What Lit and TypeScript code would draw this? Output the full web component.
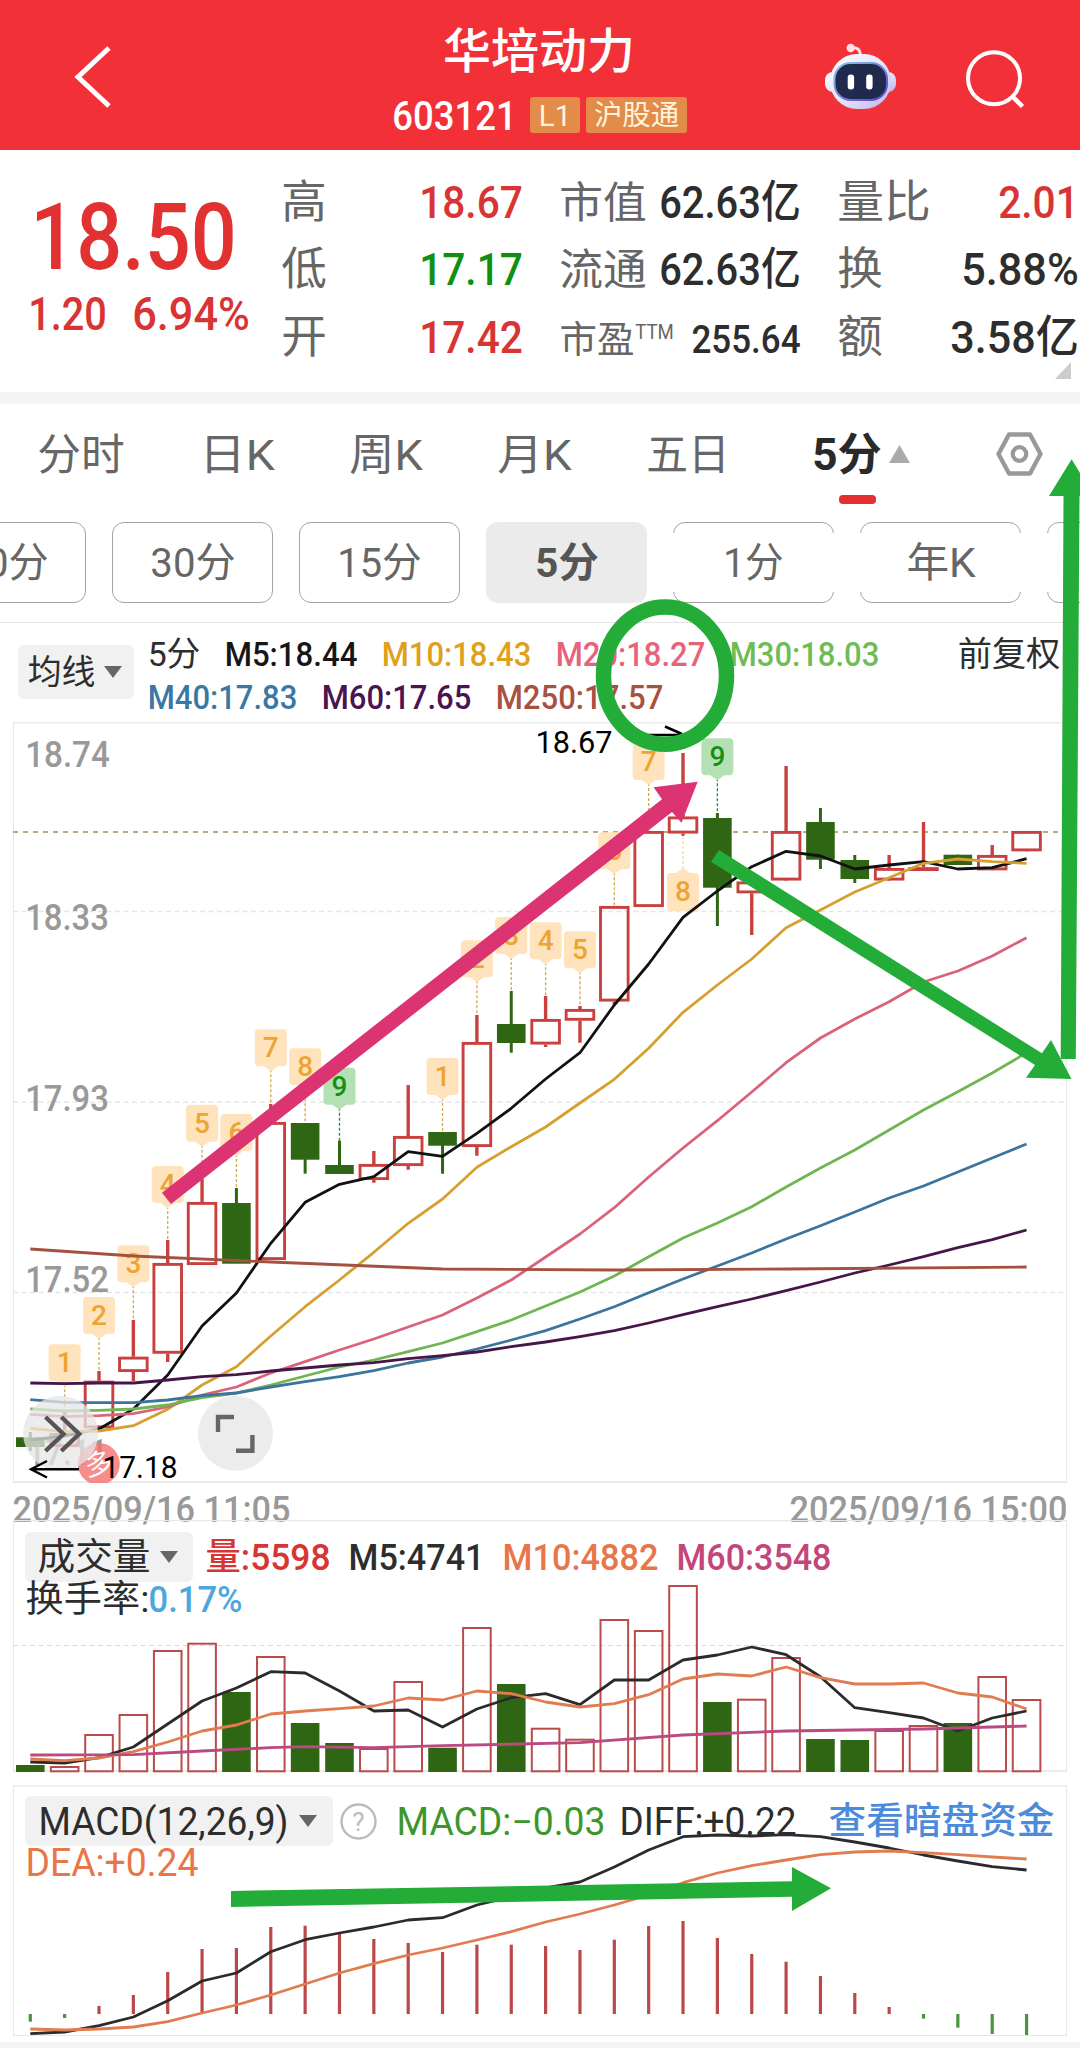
import { LitElement, html, svg, css } from "lit";
import { customElement } from "lit/decorators.js";

type Candle = [up: 0 | 1, top: number, bottom: number, high: number, low: number];

const FIRST_X = 30.3;
const STEP = 34.354;
const cx = (i: number) => FIRST_X + STEP * i;

const CANDLES: Candle[] = [
  [0, 1437.3, 1447, 1432, 1451], [1, 1433, 1447, 1410, 1447], [1, 1380.7, 1428.3, 1371, 1428],
  [1, 1356.7, 1372, 1320, 1381], [1, 1263, 1353.7, 1240, 1362], [1, 1202, 1265, 1179, 1265],
  [0, 1203, 1263.7, 1188, 1263], [1, 1122, 1260, 1104, 1260], [0, 1123, 1159.7, 1123, 1173.7],
  [0, 1165, 1174, 1140.7, 1174], [1, 1164, 1180, 1151, 1182.7], [1, 1136, 1166, 1085, 1169.7],
  [0, 1132, 1145.7, 1132, 1173.7], [1, 1042, 1147, 1015, 1155.7], [0, 1024, 1043, 991, 1052.7],
  [1, 1019, 1044.5, 996, 1047], [1, 1009, 1020.7, 1006, 1042.7], [1, 906, 1001.5, 906, 1005],
  [1, 831, 907, 831, 907], [1, 816.5, 833.5, 753, 835.7], [0, 818, 887.7, 813, 926],
  [1, 881.5, 893.3, 881, 935], [1, 831, 880.5, 766, 880], [0, 822, 859.7, 808, 869],
  [0, 860, 879, 855, 883], [1, 868, 880.5, 855, 880], [1, 867.2, 871, 822, 870],
  [0, 854.7, 865, 854.7, 865], [1, 855, 870.3, 845, 870], [1, 831, 851.3, 831, 851],
];

const AVERAGES: { color: string; at?: number[]; y: number[] }[] = [
  { color: "#111", y: [1440, 1436, 1429, 1409, 1375, 1326, 1293, 1243.3, 1202.3, 1184.3, 1176.7, 1151.7, 1156.3, 1133.3, 1108.3, 1079, 1052.7, 1005, 964, 917.3, 891, 866.7, 851.3, 856, 869, 865, 861.7, 869, 867.7, 858.7] },
  { color: "#d6a030", y: [1428.3, 1431.7, 1431, 1425.7, 1409.3, 1385, 1366.7, 1336, 1306.7, 1280, 1252.3, 1223.3, 1199, 1167.3, 1146.7, 1127, 1103, 1079.3, 1048.3, 1012.3, 985, 959, 927.7, 910, 892, 877.7, 863.3, 859, 861.7, 863.3] },
  { color: "#d9637a", y: [1414.3, 1416.7, 1415.7, 1413.7, 1407, 1395, 1387, 1373, 1361.7, 1350, 1339, 1327, 1315, 1298, 1280, 1257, 1234, 1207.7, 1177, 1148, 1120.7, 1092, 1062.7, 1038, 1019, 1001.7, 982, 971, 956, 937.7] },
  { color: "#6fb653", y: [1409, 1411, 1410.3, 1409, 1405, 1397.7, 1393, 1385, 1376, 1367, 1360, 1351.7, 1343, 1331.7, 1320, 1306, 1292, 1276, 1256.7, 1238, 1223, 1206.7, 1187, 1168, 1150, 1130, 1110, 1091.7, 1073, 1052.7] },
  { color: "#3c749c", y: [1399.7, 1402.3, 1402.7, 1402.7, 1400, 1395.7, 1393, 1387, 1381.7, 1376.7, 1370.7, 1363, 1357, 1349, 1340, 1330.7, 1319, 1306.7, 1292.7, 1279, 1266, 1253, 1239, 1225.7, 1212, 1198, 1186, 1172, 1158, 1144] },
  { color: "#451648", y: [1383, 1383.7, 1383, 1383, 1380, 1376.7, 1374.7, 1371, 1368, 1365, 1362.7, 1358.7, 1355.7, 1352, 1346.7, 1342, 1336.7, 1330.7, 1323, 1314.7, 1306.7, 1299, 1290.7, 1282, 1273, 1265, 1256.7, 1247.7, 1239.7, 1230] },
  { color: "#a4513f", at: [0, 3, 7, 12, 17, 22, 29], y: [1249, 1256, 1262, 1269, 1270, 1269, 1267] },
];

// [candle index, label, top of the tag, end of its dotted leader]
const TAGS: [number, string, number, number][] = [
  [1, "1", 1344.3, 1410], [2, "2", 1297, 1371], [3, "3", 1245.3, 1320], [4, "4", 1166, 1240],
  [5, "5", 1104.7, 1180], [6, "6", 1114, 1188], [7, "7", 1029.3, 1104], [8, "8", 1048.3, 1123],
  [9, "9", 1067.7, 1141], [12, "1", 1058, 1132], [13, "2", 940.3, 1015], [14, "3", 917, 991],
  [15, "4", 922.3, 996], [16, "5", 931.3, 1005], [17, "6", 832.3, 906], [18, "7", 743, 831],
  [20, "9", 738.3, 813],
];

const VOLUMES: [0 | 1, number][] = [
  [0, 1765], [1, 1766], [1, 1734], [1, 1714], [1, 1650], [1, 1642.7], [0, 1692], [1, 1656], [0, 1723], [0, 1743],
  [1, 1748], [1, 1681], [0, 1747.7], [1, 1627], [0, 1684], [1, 1727.7], [1, 1738.7], [1, 1619], [1, 1630], [1, 1585],
  [0, 1702], [1, 1698.7], [1, 1657], [0, 1739], [0, 1740], [1, 1730], [1, 1725], [0, 1723], [1, 1676], [1, 1699],
];
const VOL5 = [1762, 1763, 1757.7, 1747, 1724, 1701, 1688, 1671.7, 1673, 1691, 1711, 1710, 1727, 1709, 1697.7, 1693.7, 1704.7, 1680, 1680, 1660, 1655, 1647, 1654.7, 1676.7, 1707.7, 1712.7, 1718, 1731, 1718, 1711];
const VOL10 = [1759, 1760.7, 1758, 1751.7, 1742, 1731, 1725, 1714, 1711, 1708.7, 1706, 1698, 1700, 1691, 1693.7, 1702, 1707, 1703.7, 1694.7, 1679, 1674, 1676, 1667, 1677.7, 1684, 1684, 1683, 1693, 1697, 1709];
const VOL60_AT = [0, 3, 5, 7, 8, 10, 12, 16, 19, 22, 26, 29];
const VOL60 = [1755, 1754.7, 1751, 1747.7, 1746.7, 1747.7, 1745.7, 1742.7, 1735, 1731, 1729, 1726];

const MACD_ZERO = 2014;
const MACD = [2021.7, 2018, 2006, 1995, 1972, 1949, 1948, 1927, 1925.7, 1933, 1939, 1943, 1952, 1944.7, 1944.7, 1946, 1950, 1939.7, 1926, 1921, 1938, 1954, 1961.7, 1976, 1993, 2007, 2018.7, 2027.7, 2034, 2035];
const DIFF = [2033.7, 2032, 2025.7, 2017, 2000.7, 1981, 1973, 1951.7, 1939.7, 1933, 1927, 1920, 1917.7, 1905, 1896.7, 1888, 1882, 1867, 1850, 1836.7, 1835, 1836, 1834.7, 1836.7, 1842, 1848, 1855, 1861, 1866.7, 1870];
const DEA = [2029, 2030, 2029, 2027, 2021.7, 2013, 2005, 1995, 1984, 1973, 1963.7, 1955, 1948, 1940, 1931.7, 1922, 1914, 1905, 1895, 1882.7, 1873, 1865.7, 1860, 1854.7, 1852, 1851, 1852.7, 1854.7, 1857, 1859];

const line = (ys: number[], color: string, width = 2.8, at?: number[]) => svg`
  <polyline fill="none" stroke=${color} stroke-width=${width} stroke-linejoin="round"
    points=${ys.map((y, i) => `${cx(at ? at[i] : i)},${y}`).join(" ")}></polyline>`;

// Text condensed to a given width; the box is as tall as a digit and sits on the baseline.
const fit = (s: string, w: number, size: number, cls = "") => html`
  <svg class="fit ${cls}" width=${w} height=${Math.round(size * 0.71)}>
    <text x=${-size * 0.04} y=${Math.round(size * 0.71)} font-size=${size}
      textLength=${w + size * 0.08} lengthAdjust="spacingAndGlyphs">${s}</text>
  </svg>`;

const label = (s: string, x: number, y: number, w: number, size: number, cls: string) => svg`
  <text class=${cls} x=${x - size * 0.05} y=${y} font-size=${size} textLength=${w + size * 0.1}
    lengthAdjust="spacingAndGlyphs">${s}</text>`;

const caret = () => html`<svg class="caret" width="18" height="12"><path d="M0 0H18L9 12Z" fill="#666"></path></svg>`;

@customElement("app-root")
export class AppRoot extends LitElement {
  static styles = css`
    :host { display: block; position: relative; width: 1080px; height: 2048px; overflow: hidden;
      background: #fff; color: #2d2d2d; font-family: Roboto, "Noto Sans CJK SC", sans-serif; }
    svg { display: block; flex: none; }
    text { fill: currentColor; }
    .fit { overflow: visible; }
    .m { font-weight: 500; }
    .b { font-weight: 700; }
    .red { color: #d93434; }
    .green { color: #109010; }
    .gray { color: #666; }
    .row { display: flex; align-items: flex-end; }

    header { display: flex; height: 150px; background: #f23038; color: #fff; }
    .back { margin: 44px 0 0 73px; }
    .title { display: flex; flex-direction: column; width: 294px; margin-left: 281px; }
    .name { margin: 34px 0 0 51px; }
    .codes { display: flex; align-items: center; gap: 6px; height: 36px; margin-top: 29px; }
    .codes .code { margin-right: 9px; }
    .tag { display: flex; align-items: center; justify-content: center; height: 36px; border-radius: 3px;
      background: #e38b49; color: #fff3dc; }
    .l1 { width: 50px; }
    .hk { width: 101px; }
    .bot { margin: 42px 0 0 136px; }
    .search { margin: 49px 0 0 68px; }

    .quote { display: flex; height: 242px; }
    .price { width: 281px; padding-top: 53px; box-sizing: border-box; }
    .last { margin-left: 34px; color: #e23131; }
    .change { gap: 29px; margin: 28px 0 0 30px; }
    .stats { display: flex; flex-direction: column; width: 240px; margin-right: 38px; }
    .stats .row { height: 67.7px; justify-content: space-between; }
    .stats .row > .gray { margin-left: 2px; }
    .stats.end { margin-right: 0; }
    .ttm { align-self: flex-end; margin: 0 auto 14px 3px; }
    .fold { align-self: flex-end; margin: 9px 6px 0 0; }
    .strip { height: 12px; background: #f4f4f4; }

    .tabs { height: 66px; }
    .tabs > .fit { margin-left: 78px; }
    .tabs > .fit:first-child { margin-left: 39px; }
    .now { margin-left: 86px; color: #2a2a2a; }
    .up { margin: 0 0 7px 9px; }
    .hex { margin: 0 0 -7px 86px; }
    .mark { width: 37px; height: 9px; margin: 25px 0 18px 839px; border-radius: 4px; background: #e22f2f; }
    .chips { display: flex; gap: 26px; margin-left: -75px; height: 81px; color: #666; }
    .chip { position: relative; flex: none; display: flex; align-items: center; justify-content: center;
      width: 161px; box-sizing: border-box; border: 1.5px solid #a3a3a3; border-radius: 12px; }
    .chip .fit { position: relative; }
    .open::before { content: ""; position: absolute; inset: 10px -3px; background: #fff; }
    .on { border: none; background: #ebebeb; color: #555; }

    .legend { display: flex; height: 99px; margin-top: 19px; border-top: 1px solid #e4e4e4; }
    .drop { display: flex; align-items: center; background: #f1f1f1; border-radius: 6px; }
    .ma { width: 116px; height: 54px; margin: 22px 15px 0 18px; box-sizing: border-box; padding-left: 11px; gap: 10px; }
    .line { height: 43px; gap: 27px; }
    .adj { margin: 19px 0 0 81px; }
    .c5 { color: #161616; } .c10 { color: #dfa01c; } .c20 { color: #e5647a; } .c30 { color: #6fbc54; }
    .c40 { color: #3a78a4; } .c60 { color: #4b1450; } .c250 { color: #a9513f; }

    .dates { justify-content: space-between; height: 37px; padding: 0 14px; color: #999; }
    .dates .fit { margin-bottom: -2px; }
    .panel { display: grid; grid-template-columns: 1080px; }
    .panel > * { grid-area: 1 / 1; }
    .vol { height: 265px; }
    .mac { height: 257px; }
    .info { display: flex; flex-direction: column; }
    .vhead { display: flex; align-items: center; height: 50px; margin: 12px 0 0 25px; }
    .vdrop { width: 168px; height: 50px; margin-right: 14px; box-sizing: border-box; padding-left: 14px; gap: 11px; }
    .vhead > .fit { margin-right: 21px; }
    .turn { gap: 2px; margin: 4px 0 0 27px; }
    .mhead { display: flex; align-items: center; height: 50px; margin: 11px 0 0 25px; }
    .mdrop { width: 308px; height: 50px; margin-right: 7px; box-sizing: border-box; padding-left: 15px; gap: 12px; }
    .mhead .diff { margin: 0 35px 0 17px; }
    .help { margin-right: 21px; }
    .help text { fill: #bbb; }
    .mgreen { color: #3d962c; }
    .orange { color: #e8764a; }
    .plum { color: #c4457c; }
    .sky { color: #4da6dc; }
    .link { color: #4a8bdc; }
    .dea { margin: 3px 0 0 27px; }
    .foot { height: 6px; background: #f4f4f4; }
    .axis { color: #999; }
    .ink { color: #000; }
    .otag { color: #eda432; font-weight: 500; }
    .gtag { color: #149014; font-weight: 500; }
    .seal { color: #fff; }
    .notes { position: absolute; left: 0; top: 0; }
  `;

  private tag([i, n, top, end]: [number, string, number, number]) {
    const x = cx(i);
    const g = n === "9";
    return svg`
      <path d="M${x} ${top + 40}V${end}" stroke=${g ? "#2d8a2d" : "#d2a94e"} stroke-width="1.3" stroke-dasharray="3 2"></path>
      <path d=${`M${x - 12} ${top}h24q4 0 4 4v29q0 4-4 4h-5l-7 5-7-5h-5q-4 0-4-4v-29q0-4 4-4Z`}
        fill=${g ? "#b4e1b3" : "#ffe3bc"}></path>
      <text class=${g ? "gtag" : "otag"} x=${x} y=${top + 28} font-size="28" text-anchor="middle">${n}</text>`;
  }

  private candle([up, top, bottom, high, low]: Candle, i: number) {
    const x = cx(i);
    return up
      ? svg`<path d="M${x} ${high}V${top}M${x} ${bottom}V${low}" stroke="#c8413f" stroke-width="3.4"></path>
          <rect x=${x - 13.8} y=${top + 1.4} width="27.6" height=${Math.max(bottom - top - 2.8, 1)}
            fill="none" stroke="#c8413f" stroke-width="2.9"></rect>`
      : svg`<path d="M${x} ${high}V${low}" stroke="#2f6614" stroke-width="3"></path>
          <rect x=${x - 14.3} y=${top} width="28.6" height=${bottom - top} fill="#2f6614"></rect>`;
  }

  private mainChart() {
    return html`<svg width="1080" height="761" viewBox="0 722 1080 761">
      <path d="M13.5 722V1482M1066.5 722V1482" stroke="#e8e8e8" stroke-width="1.2"></path>
      <path d="M13 722.5H1067M13 1482H1067" stroke="#ebebeb" stroke-width="2"></path>
      <path d="M13 911.5H1066M13 1102H1066M13 1292.5H1066" stroke="#e6e6e6" stroke-width="1.3" stroke-dasharray="5 3.5"></path>
      <path d="M13 832H1066" stroke="#b9a880" stroke-width="2" stroke-dasharray="5 5"></path>
      ${label("18.74", 27, 767, 81, 37, "axis m")}
      ${label("18.33", 27, 930, 80, 37, "axis m")}
      ${label("17.93", 27, 1111, 80, 37, "axis m")}
      ${label("17.52", 27, 1292, 80, 37, "axis m")}
      ${label("17.11", 29, 1465, 77, 37, "axis m")}
      ${CANDLES.map((c, i) => this.candle(c, i))}
      ${TAGS.map((t) => this.tag(t))}
      <path d="M${cx(19)} 836V869" stroke="#f3dda8" stroke-width="1.3" stroke-dasharray="3 2"></path>
      <path d=${`M${cx(19) - 12} 873h5l7-5 7 5h5q4 0 4 4v30q0 4-4 4h-24q-4 0-4-4v-30q0-4 4-4Z`} fill="#ffe3bc"></path>
      <text class="otag" x=${cx(19)} y="901" font-size="28" text-anchor="middle">8</text>
      ${AVERAGES.map((a) => line(a.y, a.color, 2.8, a.at))}
      <circle cx="98.8" cy="1464" r="21" fill="#f4716e" fill-opacity=".8"></circle>
      <text class="seal" x="98.8" y="1474" font-size="28" text-anchor="middle" transform="rotate(-10 98.8 1464)">多</text>
      <circle cx="60.6" cy="1433.3" r="37.5" fill="#e6e6e6" fill-opacity=".76"></circle>
      <path d="M45.5 1417L63.4 1434L45.5 1451M61.3 1417L79.2 1434L61.3 1451" fill="none" stroke="#555" stroke-width="4.4"></path>
      <circle cx="235.5" cy="1433.3" r="37.5" fill="#ececec"></circle>
      <path d="M234 1417H218V1432M252.4 1435V1450.7H236" fill="none" stroke="#666" stroke-width="4.4"></path>
      <path d="M79 1469.3H31M47 1461L31 1469.3L47 1477.5" fill="none" stroke="#000" stroke-width="2.4"></path>
      ${label("17.18", 104, 1478, 72, 31, "ink")}
      ${label("18.67", 537, 753, 74, 31, "ink")}
      <path d="M645 735H682M665 726.5L682 734" fill="none" stroke="#000" stroke-width="2.6"></path>
    </svg>`;
  }

  private volumeChart() {
    return html`<svg width="1080" height="265" viewBox="0 1520 1080 265">
      <path d="M13.5 1771V1520.6H1066.5V1771" fill="none" stroke="#e8e8e8" stroke-width="1.2"></path>
      <path d="M13 1771H1067" stroke="#ebebeb" stroke-width="2"></path>
      <path d="M13 1645.5H1066" stroke="#dadada" stroke-width="1.2" stroke-dasharray="5 3.5"></path>
      ${VOLUMES.map(([up, top], i) =>
        up
          ? svg`<rect x=${cx(i) - 13.8} y=${top + 1} width="27.6" height=${1771.3 - top - 1} fill="none" stroke="#bb4a4a" stroke-width="2"></rect>`
          : svg`<rect x=${cx(i) - 14.3} y=${top} width="28.6" height=${1772 - top} fill="#2f6614"></rect>`
      )}
      ${line(VOL5, "#2b2b2b")}${line(VOL10, "#e07c50")}${line(VOL60, "#bb4a80", 2.8, VOL60_AT)}
    </svg>`;
  }

  private macdChart() {
    return html`<svg width="1080" height="257" viewBox="0 1785 1080 257">
      <path d="M13.5 1785V2035.5H1066.5V1785" fill="none" stroke="#e8e8e8" stroke-width="1.2"></path>
      <path d="M13 1785.5H1067" stroke="#ebebeb" stroke-width="2"></path>
      ${MACD.map((y, i) => svg`<path d="M${cx(i)} ${MACD_ZERO}V${y}" stroke=${y > MACD_ZERO ? "#4a9440" : "#bb4848"} stroke-width="3.2"></path>`)}
      ${line(DIFF, "#2b2b2b")}${line(DEA, "#e07c50")}
    </svg>`;
  }

  render() {
    return html`
      <header>
        <svg class="back" width="40" height="66"><path d="M36 4L5 33L36 62" fill="none" stroke="#fff" stroke-width="5"></path></svg>
        <div class="title">
          <div class="name">${fit("华培动力", 188, 48, "m")}</div>
          <div class="codes">
            ${fit("603121", 121, 41, "m code")}
            <span class="tag l1">${fit("L1", 30, 29)}</span>
            <span class="tag hk">${fit("沪股通", 83, 28)}</span>
          </div>
        </div>
        <svg class="bot" width="73" height="70" viewBox="824 42 73 70">
          <defs>
            <linearGradient id="shell" x1="0" y1="0" x2="1" y2="1">
              <stop offset="0" stop-color="#fff"></stop><stop offset=".55" stop-color="#e3e2fa"></stop><stop offset="1" stop-color="#b9b4ec"></stop>
            </linearGradient>
            <linearGradient id="rim" x1="0" y1="0" x2="1" y2="1">
              <stop offset="0" stop-color="#8cc8e8"></stop><stop offset="1" stop-color="#5b3bc4"></stop>
            </linearGradient>
          </defs>
          <path d="M851 48Q860 46 860.5 56" fill="none" stroke="#ffdfe6" stroke-width="3"></path>
          <circle cx="850.7" cy="48" r="4.2" fill="#ffdfe6"></circle>
          <rect x="825" y="72" width="71" height="20" rx="8" fill="url(#shell)"></rect>
          <rect x="830" y="54" width="61" height="55" rx="27" fill="url(#shell)"></rect>
          <rect x="834.5" y="63" width="52.5" height="37" rx="16" fill="#202a4c" stroke="url(#rim)" stroke-width="2"></rect>
          <rect x="847.7" y="74.5" width="6.4" height="15" rx="3" fill="#fff"></rect>
          <rect x="866.2" y="74.5" width="6.4" height="15" rx="3" fill="#fff"></rect>
        </svg>
        <svg class="search" width="62" height="62" viewBox="965 49 62 62">
          <circle cx="994" cy="78.3" r="26" fill="none" stroke="#fff" stroke-width="4"></circle>
          <path d="M1012 96L1022.5 106.5" stroke="#fff" stroke-width="4.5"></path>
        </svg>
      </header>

      <section class="quote">
        <div class="price">
          <div class="last">${fit("18.50", 199, 93, "m")}</div>
          <div class="row change red">${fit("1.20", 75, 46, "m")}${fit("6.94%", 114, 46, "m")}</div>
        </div>
        <div class="stats">
          <div class="row">${fit("高", 42, 45, "gray")}${fit("18.67", 100, 45, "m red")}</div>
          <div class="row">${fit("低", 42, 45, "gray")}${fit("17.17", 100, 45, "m green")}</div>
          <div class="row">${fit("开", 42, 45, "gray")}${fit("17.42", 100, 45, "m red")}</div>
        </div>
        <div class="stats">
          <div class="row">${fit("市值", 84, 43, "gray")}${fit("62.63亿", 138, 45, "m")}</div>
          <div class="row">${fit("流通", 84, 43, "gray")}${fit("62.63亿", 138, 45, "m")}</div>
          <div class="row">${fit("市盈", 72, 37, "gray")}<span class="ttm">${fit("TTM", 37, 20, "gray")}</span>${fit("255.64", 106, 39, "m")}</div>
        </div>
        <div class="stats end">
          <div class="row">${fit("量比", 90, 45, "gray")}${fit("2.01", 77, 45, "m red")}</div>
          <div class="row">${fit("换", 42, 45, "gray")}${fit("5.88%", 114, 45, "m")}</div>
          <div class="row">${fit("额", 42, 45, "gray")}${fit("3.58亿", 125, 45, "m")}</div>
          <svg class="fold" width="16" height="17"><path d="M16 0V17H0Z" fill="#ccc"></path></svg>
        </div>
      </section>
      <div class="strip"></div>

      <nav>
        <div class="row tabs gray">
          ${fit("分时", 84, 43)}${fit("日K", 72, 43)}${fit("周K", 70, 43)}${fit("月K", 71, 43)}${fit("五日", 80, 43)}
          <div class="now">${fit("5分", 66, 44, "b")}</div>
          <svg class="up" width="21" height="18"><path d="M0 18L10.5 0L21 18Z" fill="#aaa"></path></svg>
          <svg class="hex" width="48" height="46" viewBox="995 431 48 46">
            <path d="M1008 434.5H1029L1039.5 454L1029 473.5H1008L997.5 454Z" fill="none" stroke="#999" stroke-width="4.4" stroke-linejoin="round"></path>
            <circle cx="1018.5" cy="454" r="6.8" fill="none" stroke="#999" stroke-width="4.2"></circle>
          </svg>
        </div>
        <div class="mark"></div>
        <div class="chips">
          <span class="chip">${fit("60分", 82, 41)}</span>
          <span class="chip">${fit("30分", 82, 41)}</span>
          <span class="chip">${fit("15分", 81, 41)}</span>
          <span class="chip on">${fit("5分", 60, 41, "b")}</span>
          <span class="chip open">${fit("1分", 57, 41)}</span>
          <span class="chip open">${fit("年K", 66, 41)}</span>
          <span class="chip open"></span>
        </div>
      </nav>

      <section class="legend">
        <div class="drop ma">${fit("均线", 65, 34)}${caret()}</div>
        <div>
          <div class="row line">${fit("5分", 50, 34)}${fit("M5:18.44", 130, 34, "m c5")}${fit("M10:18.43", 147, 34, "m c10")}${fit("M20:18.27", 147, 34, "m c20")}${fit("M30:18.03", 147, 34, "m c30")}</div>
          <div class="row line">${fit("M40:17.83", 147, 34, "m c40")}${fit("M60:17.65", 147, 34, "m c60")}${fit("M250:17.57", 165, 34, "m c250")}</div>
        </div>
        <div class="adj">${fit("前复权", 100, 34)}</div>
      </section>

      ${this.mainChart()}
      <div class="row dates">${fit("2025/09/16 11:05", 275, 37, "m")}${fit("2025/09/16 15:00", 275, 37, "m")}</div>

      <section class="panel vol">
        ${this.volumeChart()}
        <div class="info">
          <div class="vhead">
            <div class="drop vdrop">${fit("成交量", 110, 37)}${caret()}</div>
            ${fit("量:5598", 122, 37, "m red")}${fit("M5:4741", 133, 37, "m")}${fit("M10:4882", 153, 37, "m orange")}${fit("M60:3548", 152, 37, "m plum")}
          </div>
          <div class="row turn">${fit("换手率:", 121, 37)}${fit("0.17%", 91, 37, "m sky")}</div>
        </div>
      </section>

      <section class="panel mac">
        ${this.macdChart()}
        <div class="info">
          <div class="mhead">
            <div class="drop mdrop">${fit("MACD(12,26,9)", 247, 38)}${caret()}</div>
            <svg class="help" width="37" height="37">
              <circle cx="18.5" cy="18.5" r="17" fill="none" stroke="#bbb" stroke-width="2.4"></circle>
              <text x="18.5" y="27.5" font-size="26" text-anchor="middle">?</text>
            </svg>
            ${fit("MACD:−0.03", 206, 38, "mgreen")}${fit("DIFF:+0.22", 174, 38, "diff")}${fit("查看暗盘资金", 223, 37, "link m")}
          </div>
          <div class="dea">${fit("DEA:+0.24", 170, 38, "orange")}</div>
        </div>
      </section>
      <div class="foot"></div>

      <svg class="notes" width="1080" height="2048">
        <ellipse cx="665" cy="675.7" rx="61.5" ry="68.6" fill="none" stroke="#24ac38" stroke-width="15.5"></ellipse>
        <path d="M162 1192.7L662 799.3L653.6 787.3L697.7 781.7L681.5 822.7L672 812L171 1204Z" fill="#dc3373"></path>
        <path d="M719 850L1042 1053.3L1051 1040L1071.5 1079L1026 1077.7L1035 1065L711 861.7Z" fill="#24ac38"></path>
        <path d="M1060.7 1059L1063.5 496H1049L1071.6 459.3L1094 496H1079.5L1075.8 1059Z" fill="#24ac38"></path>
        <path d="M231 1891L792 1881.3V1867L831 1888.3L792 1911V1896.7L231 1907Z" fill="#24ac38"></path>
      </svg>
    `;
  }
}
